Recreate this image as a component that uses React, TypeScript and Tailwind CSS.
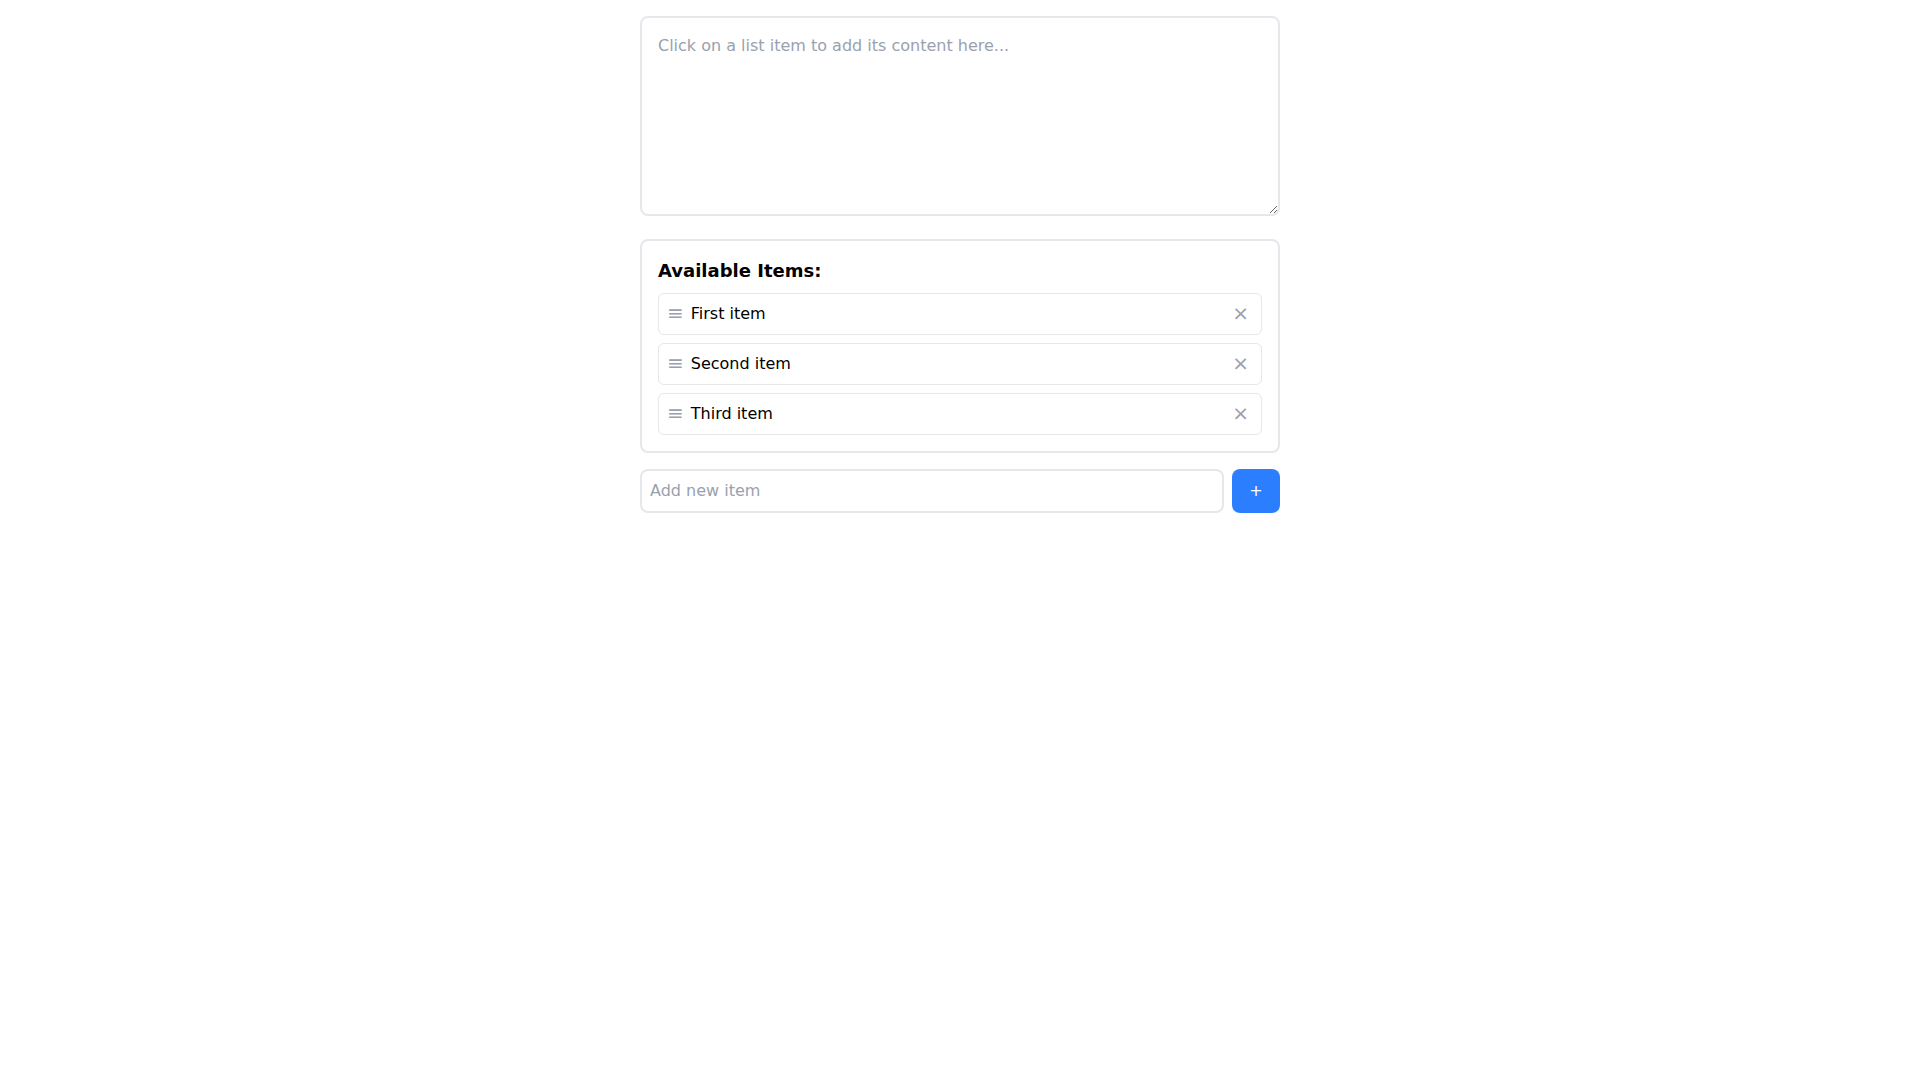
import { useState } from "react";

export default function App() {
  const [items, setItems] = useState<string[]>(["First item", "Second item", "Third item"]);
  const [text, setText] = useState("");
  const [newItem, setNewItem] = useState("");

  const addItem = () => {
    if (!newItem.trim()) return;
    setItems([...items, newItem.trim()]);
    setNewItem("");
  };

  return (
    <div className="min-h-screen bg-white p-4 font-['DejaVu_Sans',sans-serif] text-black">
      <div className="w-[640px] mx-auto">
        {/* Text area */}
        <textarea
          className="block w-full h-[200px] p-4 border-2 border-gray-200 rounded-lg text-base placeholder:text-gray-400 focus:outline-none"
          placeholder="Click on a list item to add its content here..."
          value={text}
          onChange={(e) => setText(e.target.value)}
        />

        {/* Items */}
        <div className="mt-[23px] p-4 border-2 border-gray-200 rounded-lg">
          <h2 className="text-lg font-bold mb-2">Available Items:</h2>
          <div className="flex flex-col gap-2">
            {items.map((item, i) => (
              <div
                key={i}
                className="flex items-center h-[42px] px-2 border border-gray-200 rounded-md cursor-pointer"
                onClick={() => setText(text ? text + "\n" + item : item)}
              >
                <span className="text-xl leading-none text-gray-400 mr-[7px] -translate-y-px">≡</span>
                <span className="flex-1">{item}</span>
                <button
                  className="px-1 text-xl leading-none text-gray-400 -translate-y-px"
                  onClick={(e) => {
                    e.stopPropagation();
                    setItems(items.filter((_, j) => j !== i));
                  }}
                >
                  ×
                </button>
              </div>
            ))}
          </div>
        </div>

        {/* Add new */}
        <div className="mt-4 flex gap-2">
          <input
            className="flex-1 px-2 py-2 border-2 border-gray-200 rounded-lg placeholder:text-gray-400 focus:outline-none"
            placeholder="Add new item"
            value={newItem}
            onChange={(e) => setNewItem(e.target.value)}
            onKeyDown={(e) => e.key === "Enter" && addItem()}
          />
          <button className="w-12 bg-blue-500 text-white rounded-lg" onClick={addItem}>
            +
          </button>
        </div>
      </div>
    </div>
  );
}
